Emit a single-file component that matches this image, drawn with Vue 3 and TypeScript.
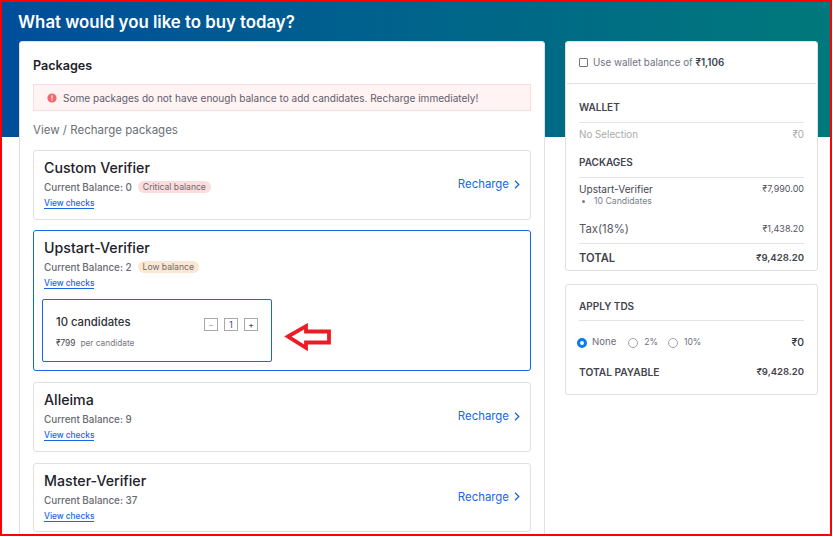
<script setup lang="ts">
interface Pack { name: string; balance: number; badge?: string; badgeKind?: string }
const first: Pack = { name: 'Custom Verifier', balance: 0, badge: 'Critical balance', badgeKind: 'crit' }
const rest: Pack[] = [
  { name: 'Alleima', balance: 9 },
  { name: 'Master-Verifier', balance: 37 },
]
</script>

<template>
  <div class="frame">
    <div class="hero">
      <h1 class="title">What would you like to buy today?</h1>
    </div>
    <div class="columns">
      <main class="panel main">
        <h2 class="heading">Packages</h2>
        <div class="alert">
          <svg class="alert-icon" width="10" height="10" viewBox="0 0 10 10">
            <circle cx="5" cy="5" r="4.6" fill="#f4696f" />
            <rect x="4.500" y="2.200" width="1" height="3.500" fill="#fff" />
            <rect x="4.500" y="6.500" width="1" height="1.200" fill="#fff" />
          </svg>
          <span>Some packages do not have enough balance to add candidates. Recharge immediately!</span>
        </div>
        <div class="sub">View / Recharge packages</div>

        <section class="pack">
          <div class="pack-info">
            <div class="pack-name">{{ first.name }}</div>
            <div class="pack-bal">Current Balance: {{ first.balance }}<span class="badge crit">{{ first.badge }}</span></div>
            <a class="checks">View checks</a>
          </div>
          <a class="recharge">Recharge
            <svg width="6" height="9" viewBox="0 0 6 9"><path d="M1 .8 4.8 4.5 1 8.2" fill="none" stroke="#1a66e8" stroke-width="1.3" /></svg>
          </a>
        </section>

        <section class="pack selected">
          <div class="pack-info">
            <div class="pack-name">Upstart-Verifier</div>
            <div class="pack-bal">Current Balance: 2<span class="badge low">Low balance</span></div>
            <a class="checks">View checks</a>
            <div class="tier">
              <div class="tier-top">
                <span class="tier-name">10 candidates</span>
                <div class="stepper">
                  <span class="step light">−</span>
                  <span class="step">1</span>
                  <span class="step">+</span>
                </div>
              </div>
              <div class="tier-price"><span class="rate">₹799</span>per candidate</div>
            </div>
          </div>
          <svg class="arrow" width="48" height="28" viewBox="0 0 48 28">
            <path d="M4 13.500 22 3.200V8.500H45V19.500H22V24.800Z" fill="#fff" stroke="#ed1c24" stroke-width="3.800" />
          </svg>
        </section>

        <section v-for="p in rest" :key="p.name" class="pack">
          <div class="pack-info">
            <div class="pack-name">{{ p.name }}</div>
            <div class="pack-bal">Current Balance: {{ p.balance }}</div>
            <a class="checks">View checks</a>
          </div>
          <a class="recharge">Recharge
            <svg width="6" height="9" viewBox="0 0 6 9"><path d="M1 .8 4.8 4.5 1 8.2" fill="none" stroke="#1a66e8" stroke-width="1.3" /></svg>
          </a>
        </section>
      </main>

      <aside class="side">
        <div class="panel summary">
          <label class="wallet-use">
            <span class="box"></span>
            <span>Use wallet balance of <b>₹1,106</b></span>
          </label>
          <div class="sum-body">
            <div class="sum-head first">WALLET</div>
            <div class="row muted"><span>No Selection</span><span>₹0</span></div>
            <div class="sum-head pk">PACKAGES</div>
            <div class="row item">
              <div>
                <div class="item-name">Upstart-Verifier</div>
                <ul class="item-list"><li>10 Candidates</li></ul>
              </div>
              <span>₹7,990.00</span>
            </div>
            <div class="row tax"><span class="tax-name">Tax(18%)</span><span>₹1,438.20</span></div>
            <div class="row total"><span class="total-label">TOTAL</span><span>₹9,428.20</span></div>
          </div>
        </div>

        <div class="panel tds">
          <div class="sum-head">APPLY TDS</div>
          <div class="tds-row">
            <div class="radios">
              <span class="radio on"></span><span class="r-label none">None</span>
              <span class="radio"></span><span class="r-label pct">2%</span>
              <span class="radio"></span><span class="r-label pct">10%</span>
            </div>
            <span class="zero">₹0</span>
          </div>
          <div class="row payable"><span class="pay-label">TOTAL PAYABLE</span><span>₹9,428.20</span></div>
        </div>
      </aside>
    </div>
  </div>
</template>

<style>
html, body { margin: 0; background: #fff; }
</style>

<style scoped>
.frame {
  position: relative;
  box-sizing: border-box;
  width: 832px;
  height: 536px;
  border: 2px solid #ff0000;
  overflow: hidden;
  background: #fff;
  font-family: Inter, "DejaVu Sans", sans-serif;
  color: #2b2b33;
}
.hero {
  height: 135px;
  background: linear-gradient(90deg, #004e9b 0%, #00797b 100%);
  padding: 9px 16px 0;
  box-sizing: border-box;
}
.title { margin: 0; font-size: 16.800px; line-height: 23px; font-weight: 600; color: #fff; }
.columns {
  position: absolute;
  top: 39px;
  left: 17px;
  display: flex;
  gap: 20px;
  align-items: flex-start;
}
.panel {
  box-sizing: border-box;
  background: #fff;
  border: 1px solid #e0e0e0;
  border-radius: 3px;
}
.main { width: 526px; height: 520px; padding: 0 13px; }
.heading { margin: 15px 0 10px; font-size: 12.600px; line-height: 17px; font-weight: 600; color: #22222a; }
.alert {
  display: flex;
  align-items: center;
  gap: 6px;
  height: 27px;
  box-sizing: border-box;
  padding: 0 13px;
  background: #fff3f3;
  border: 1px solid #fbdcdc;
  font-size: 10.050px;
  color: #5d5d6c;
}
.alert-icon { flex: none; }
.sub { margin-top: 12px; font-size: 11.500px; line-height: 15px; color: #6a6f78; }
.pack {
  position: relative;
  box-sizing: border-box;
  display: flex;
  align-items: flex-start;
  justify-content: space-between;
  width: 498px;
  height: 70px;
  margin-top: 11px;
  padding: 0 10px;
  border: 1px solid #e0e0e0;
  border-radius: 3px;
}
.sub + .pack { margin-top: 12px; }
.pack.selected { height: 141px; margin-top: 10px; border-color: #1766e6; }
.pack:last-child { height: 69px; }
.pack-info { display: flex; flex-direction: column; align-items: flex-start; }
.pack-name { margin-top: 8px; font-size: 14.200px; line-height: 18px; font-weight: 500; color: #22222a; }
.pack-bal { margin-top: 3px; display: flex; align-items: center; font-size: 9.850px; line-height: 14px; font-weight: 500; color: #6a6a70; }
.badge {
  margin-left: 6px;
  padding: 0 5px;
  font-size: 8.600px;
  line-height: 12px;
  font-weight: 400;
  border-radius: 6px;
  color: #6a6a70;
}
.badge.crit { background: #fcdcdc; }
.badge.low { background: #fce8d2; }
.checks {
  display: inline-block;
  margin-top: 4px;
  font-size: 8.300px;
  line-height: 10px;
  font-weight: 500;
  color: #1a66e8;
  border-bottom: 1px solid #1a66e8;
}
.recharge { align-self: center; margin-bottom: 2px; display: flex; align-items: center; gap: 5px; font-size: 11.400px; color: #1a66e8; }
.tier {
  box-sizing: border-box;
  width: 230px;
  height: 63px;
  margin: 10px 0 0 -2px;
  padding: 13px 13px 0;
  border: 1px solid #1766e6;
  border-radius: 2px;
}
.tier-top { display: flex; justify-content: space-between; align-items: center; }
.tier-name { font-size: 11.300px; font-weight: 500; color: #303038; }
.stepper { display: flex; gap: 6px; margin-top: 5px; }
.step {
  box-sizing: border-box;
  width: 14px;
  height: 13px;
  display: flex;
  align-items: center;
  justify-content: center;
  border: 1px solid #a8a8a8;
  font-size: 8.500px;
  color: #444458;
}
.step.light { color: #a0a0a8; }
.tier-price { margin-top: 6px; font-size: 8.300px; color: #77777f; line-height: 12px; }
.rate { color: #44444c; margin-right: 5px; }
.arrow { position: absolute; left: 250px; top: 92px; }

.side { width: 253px; display: flex; flex-direction: column; gap: 13px; }
.summary { height: 230px; }
.wallet-use {
  display: flex;
  align-items: center;
  gap: 5px;
  height: 41px;
  box-sizing: content-box;
  margin: 0 1px;
  padding-left: 12px;
  border-bottom: 1px solid #e0e0e0;
  font-size: 9.800px;
  color: #6e7280;
}
.wallet-use b { font-weight: 600; color: #3e4250; }
.box { width: 7px; height: 7px; border: 1px solid #777; border-radius: 1px; }
.sum-body { padding: 0 13px; }
.sum-head {
  font-size: 10px;
  line-height: 14px;
  font-weight: 600;
  color: #44444e;
  padding-bottom: 8px;
  border-bottom: 1px solid #e4e4e4;
}
.sum-head.first { margin-top: 16px; }
.sum-head.pk { margin-top: 14px; }
.row { display: flex; justify-content: space-between; }
.muted { margin-top: 5px; font-size: 9.800px; line-height: 13px; color: #aaaaaa; }
.item { margin-top: 4px; font-size: 9px; line-height: 14px; color: #55555f; }
.item-name { color: #444450; font-size: 10.100px; }
.item-list { margin: 0; padding: 0 0 0 15px; font-size: 8.700px; line-height: 10px; color: #77808c; }
.tax { margin-top: 16px; padding-bottom: 7px; font-size: 9px; line-height: 14px; color: #555560; border-bottom: 1px solid #e4e4e4; align-items: center; }
.tax-name { font-size: 11.300px; }
.total { margin-top: 7px; font-size: 9.600px; line-height: 14px; font-weight: 600; color: #44444c; align-items: center; }
.total-label { font-size: 11.200px; }
.tds { height: 111px; padding: 14px 13px 0; }
.tds .sum-head { padding-bottom: 7px; }
.tds-row { display: flex; justify-content: space-between; align-items: center; margin-top: 13px; height: 16px; }
.radios { display: flex; align-items: center; margin-left: -2px; }
.radio { box-sizing: border-box; width: 10px; height: 10px; border: 1px solid #a4a4a4; border-radius: 50%; margin-top: 1px; }
.radio.on { border: 3px solid #0a7bf0; background: #fff; }
.r-label { margin: -1px 11px 0 5px; font-size: 9.600px; color: #6e6e7e; }
.r-label.none { margin-right: 12px; }
.r-label.pct { font-size: 8.600px; margin-left: 6px; margin-right: 10px; }
.zero { font-size: 10.500px; font-weight: 500; color: #33333c; }
.payable { margin-top: 15px; font-size: 9.500px; line-height: 14px; font-weight: 600; color: #44444c; align-items: center; }
.pay-label { font-size: 10.200px; }
</style>
